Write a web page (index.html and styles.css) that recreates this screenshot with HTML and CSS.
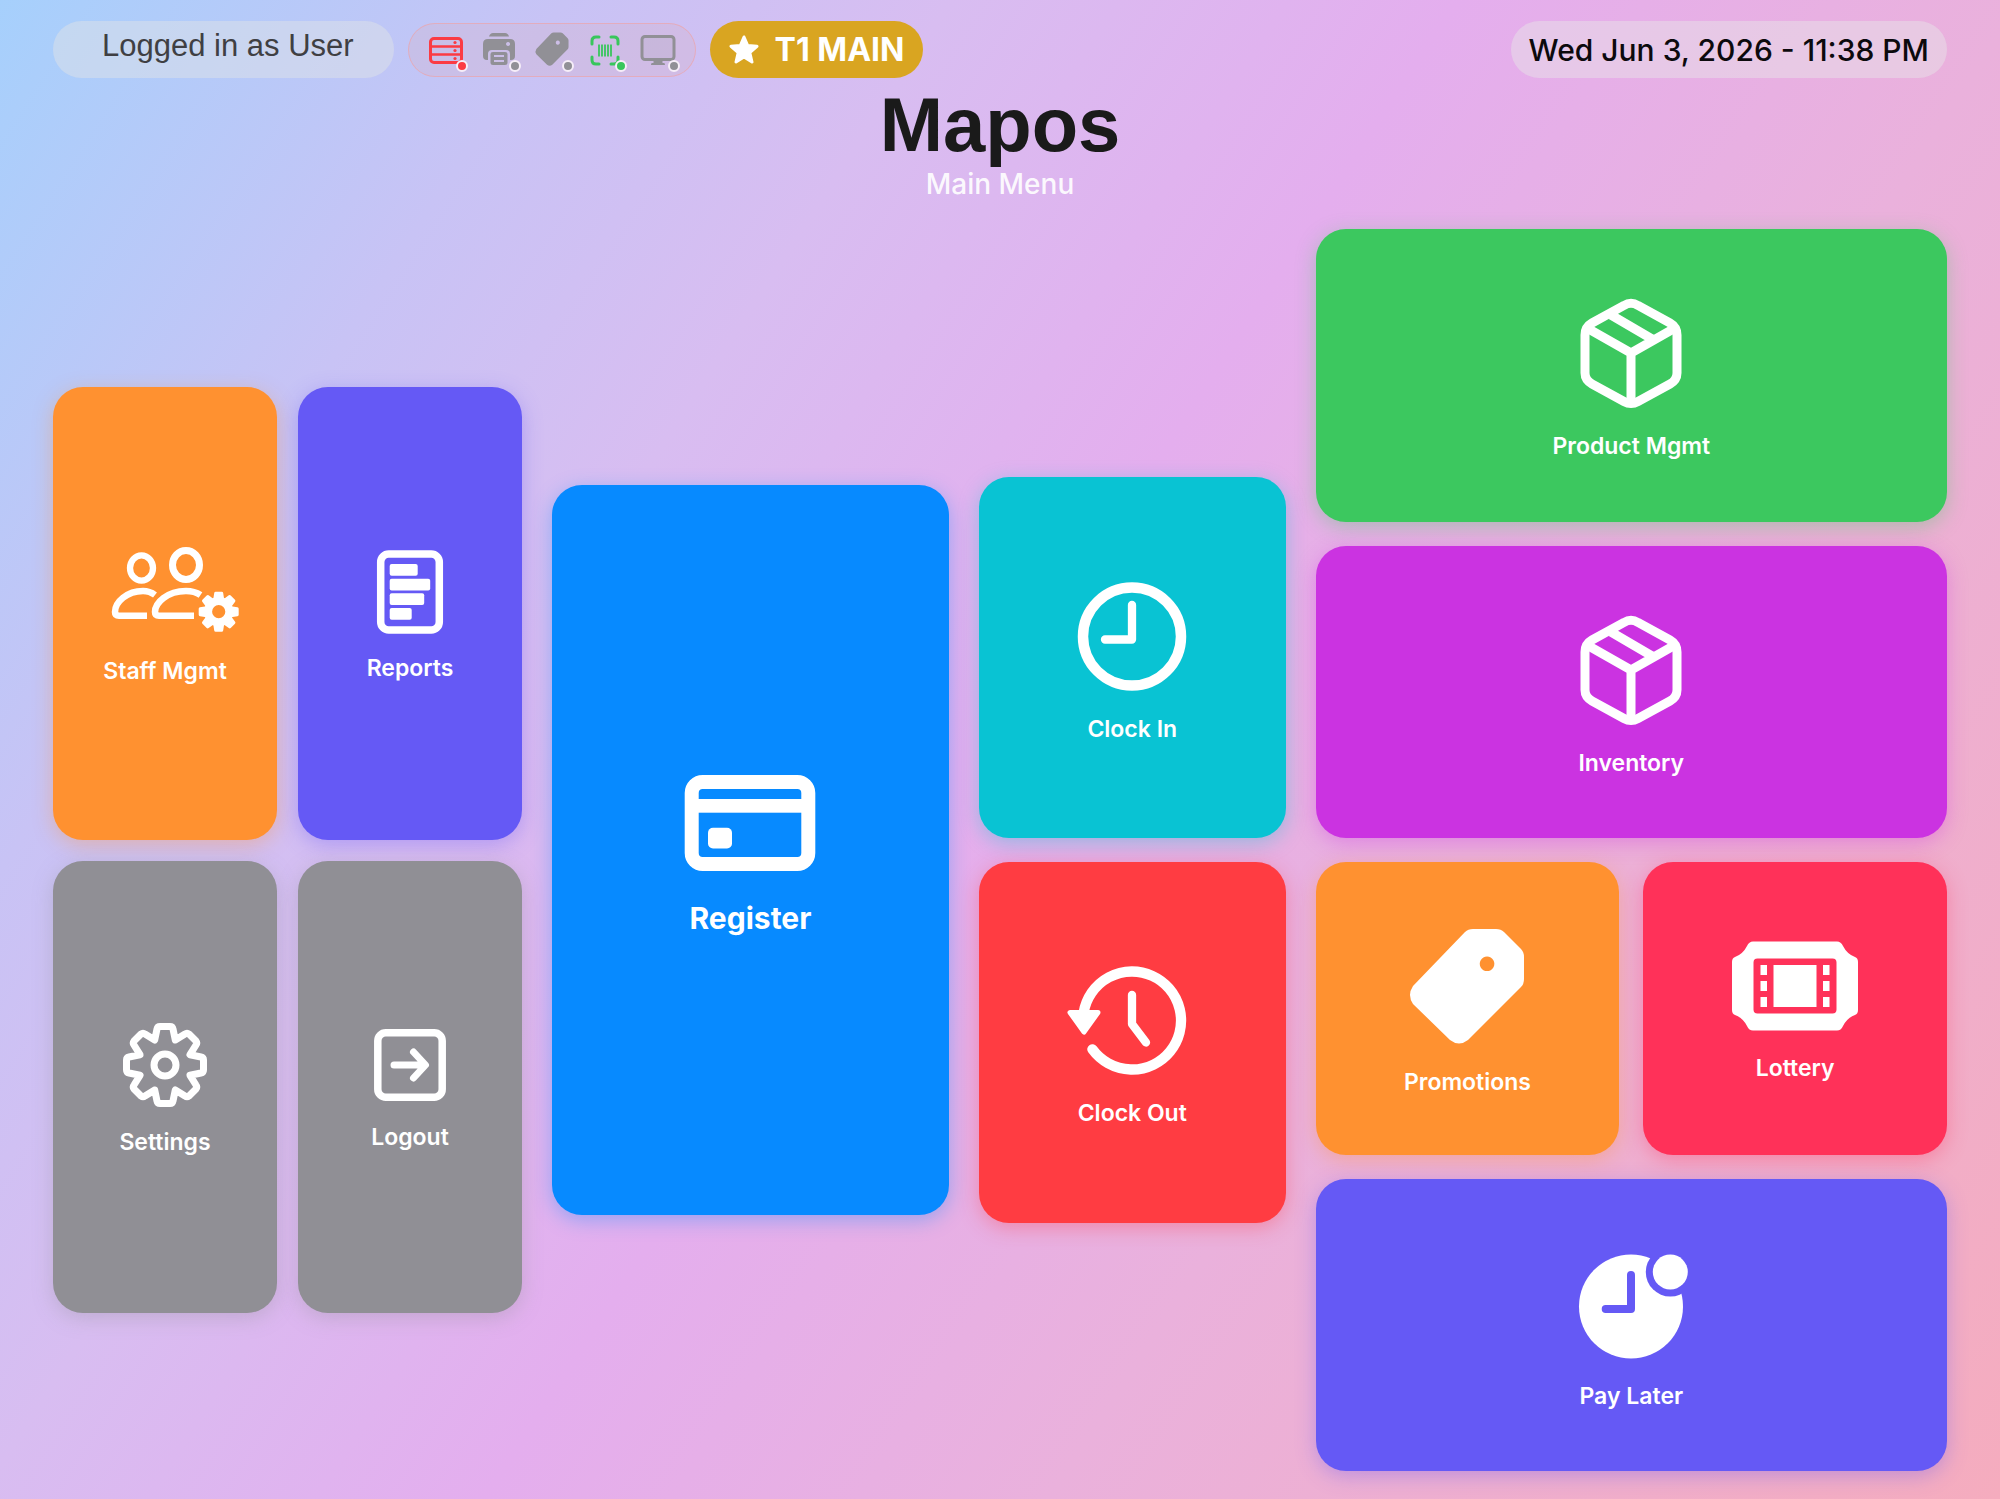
FILE: index.html
```
<!DOCTYPE html>
<html lang="en">
<head>
  <meta charset="UTF-8">
  <meta name="viewport" content="width=device-width, initial-scale=1.0">
  <title>Mapos - Main Menu</title>
  <link rel="stylesheet" href="styles.css">
</head>
<body>
  <header class="topbar">
    <div class="pill user">Logged in as User</div>

    <div class="pill devices">
      <span class="device offline">
        <svg viewBox="-18 -18 36 36" aria-label="Server">
          <rect x="-15.500" y="-11.500" width="31" height="24" rx="3.500" fill="none" stroke="currentColor" stroke-width="3"/>
          <path d="M-15-3.500H15M-15 4.500H15" stroke="currentColor" stroke-width="2.600"/>
          <circle cx="9" cy="-7.500" r="1.600"/><circle cx="9" cy=".5" r="1.600"/><circle cx="9" cy="8.500" r="1.600"/>
        </svg>
      </span>
      <span class="device">
        <svg viewBox="-18 -18 36 36" aria-label="Printer">
          <path d="M-10-13.500Q-9-17-6-17H6Q9-17 10-13.500Z"/>
          <path fill-rule="evenodd" d="M-11-11H11Q16-11 16-6V6Q16 10 12 10H11V4Q11 0 7 0H-7Q-11 0-11 4V10H-12Q-16 10-16 6V-6Q-16-11-11-11ZM9-8a2 2 0 1 0 .1 0Z"/>
          <path fill-rule="evenodd" d="M-6 2H6Q8.500 2 8.500 4V13Q8.500 15 6 15H-6Q-8.500 15-8.500 13V4Q-8.500 2-6 2ZM-5 5V7H5V5ZM-5 10V12H5V10Z"/>
        </svg>
      </span>
      <span class="device">
        <svg viewBox="-18 -18 36 36" aria-label="Label printer">
          <path transform="translate(0 -1) scale(.29)" fill-rule="evenodd" d="M6-57H29Q34-57 37-54L54-37Q57-34 57-29V-7Q57-2 54 1L1 54Q-8 61-17 54L-54 18Q-60 9-54 0L-2-54Q1-57 6-57ZM20-29a7 7 0 1 0 .1 0Z"/>
        </svg>
      </span>
      <span class="device online">
        <svg viewBox="-18 -18 36 36" aria-label="Scanner">
          <path d="M-13-6V-9Q-13-13-9-13H-6M6-13H9Q13-13 13-9V-6M13 7V10Q13 14 9 14H6M-6 14H-9Q-13 14-13 10V7" fill="none" stroke="currentColor" stroke-width="3" stroke-linecap="round"/>
          <path d="M-6-5.500V6.500M-3-5.500V6.500M0-5.500V6.500M3-5.500V6.500M6-5.500V6.500" stroke="currentColor" stroke-width="1.800"/>
        </svg>
      </span>
      <span class="device">
        <svg viewBox="-18 -18 36 36" aria-label="Customer display">
          <rect x="-16" y="-13.500" width="32" height="23" rx="3" fill="currentColor" fill-opacity=".12" stroke="currentColor" stroke-width="3"/>
          <path d="M-4.500 10H4.500V13H6Q7 13 7 15H-7Q-7 13-6 13H-4.500Z"/>
        </svg>
      </span>
    </div>

    <div class="pill terminal">
      <svg viewBox="-15 -15 30 30" aria-hidden="true">
        <path d="M0-13L3.700-4.500 13-3.700 5.800 2.500 8 12 0 7 -8 12 -5.800 2.500 -13-3.700 -3.700-4.500Z" stroke="currentColor" stroke-width="3" stroke-linejoin="round"/>
      </svg>
      T1 MAIN
    </div>

    <time class="pill clock" datetime="2026-06-03T23:38">Wed Jun 3, 2026 - 11:38 PM</time>
  </header>

  <div class="title">
    <h1>Mapos</h1>
    <p>Main Menu</p>
  </div>

  <main class="menu">
    <div class="group admin">
      <button type="button" class="tile orange">
        <svg width="150" height="100" viewBox="-75 -50 150 100" aria-hidden="true">
          <g fill="none" stroke="currentColor">
            <ellipse cx="-23.500" cy="-23" rx="11.500" ry="12.700" stroke-width="6.300"/>
            <ellipse cx="21" cy="-26" rx="13.500" ry="14.500" stroke-width="7"/>
            <path d="M-10 4C-14 1-18 0-22 0C-38 0-50 11-50 21Q-50 24.700-46 24.700H-18" stroke-width="6.500"/>
            <path d="M35.500 4C31 1 26 0 21 0C2 0-10 12-10 21Q-10 24.700-6 24.700H29" stroke-width="6.500"/>
          </g>
          <g transform="translate(53.700 20.700)" stroke="currentColor" stroke-linejoin="round">
            <circle r="10.600" fill="none" stroke-width="8"/>
            <g stroke-width="3">
              <path id="tooth" d="M-4-12L-3-18.500H3L4-12Z"/>
              <use href="#tooth" transform="rotate(45)"/>
              <use href="#tooth" transform="rotate(90)"/>
              <use href="#tooth" transform="rotate(135)"/>
              <use href="#tooth" transform="rotate(180)"/>
              <use href="#tooth" transform="rotate(225)"/>
              <use href="#tooth" transform="rotate(270)"/>
              <use href="#tooth" transform="rotate(315)"/>
            </g>
          </g>
        </svg>
        <span>Staff Mgmt</span>
      </button>
      <button type="button" class="tile indigo">
        <svg width="94" height="94" viewBox="-47 -47 94 94" aria-hidden="true">
          <rect x="-29.300" y="-37" width="58.600" height="76" rx="8" fill="none" stroke="currentColor" stroke-width="7.500"/>
          <rect x="-20.300" y="-27" width="28" height="11.700" rx="2"/>
          <rect x="-20.300" y="-12.300" width="40.500" height="11.700" rx="2"/>
          <rect x="-20.300" y="2.300" width="34.500" height="11.700" rx="2"/>
          <rect x="-20.300" y="17" width="22" height="11.700" rx="2"/>
        </svg>
        <span>Reports</span>
      </button>
      <button type="button" class="tile gray">
        <svg width="94" height="94" viewBox="-47 -47 94 94" aria-hidden="true">
          <g fill="none" stroke="currentColor" stroke-width="7" stroke-linejoin="round">
            <path d="M-5-38.500H5Q7.500-38.500 8-36L10.300-25 20-31Q22-32.500 24-31L31-24Q32.500-22 31-20L25-10.300 36-8Q38.500-7.500 38.500-5V5Q38.500 7.500 36 8L25 10.300 31 20Q32.500 22 31 24L24 31Q22 32.500 20 31L10.300 25 8 36Q7.500 38.500 5 38.500H-5Q-7.500 38.500-8 36L-10.300 25-20 31Q-22 32.500-24 31L-31 24Q-32.500 22-31 20L-25 10.300-36 8Q-38.500 7.500-38.500 5V-5Q-38.500-7.500-36-8L-25-10.300-31-20Q-32.500-22-31-24L-24-31Q-22-32.500-20-31L-10.300-25-8-36Q-7.500-38.500-5-38.500Z"/>
            <circle r="11"/>
          </g>
        </svg>
        <span>Settings</span>
      </button>
      <button type="button" class="tile gray">
        <svg width="84" height="84" viewBox="-42 -42 84 84" aria-hidden="true">
          <g fill="none" stroke="currentColor" stroke-width="7.500" stroke-linecap="round" stroke-linejoin="round">
            <rect x="-32.200" y="-32.200" width="64.400" height="64.400" rx="8"/>
            <path d="M-16 0H15M3.500-13L15.500 0 3.500 13" stroke-width="7"/>
          </g>
        </svg>
        <span>Logout</span>
      </button>
    </div>

    <div class="group sales">
      <button type="button" class="tile blue large">
        <svg width="140" height="118" viewBox="-70 -59 140 118" aria-hidden="true">
          <rect x="-58.300" y="-41" width="116.600" height="82" rx="11" fill="none" stroke="currentColor" stroke-width="14"/>
          <rect x="-56" y="-24" width="112" height="13.700"/>
          <rect x="-42" y="4.700" width="24" height="20.700" rx="5"/>
        </svg>
        <span>Register</span>
      </button>
    </div>

    <div class="group shifts">
      <button type="button" class="tile teal">
        <svg width="126" height="126" viewBox="-63 -63 126 126" aria-hidden="true">
          <g fill="none" stroke="currentColor" stroke-linecap="round" stroke-linejoin="round">
            <circle cy=".5" r="49" stroke-width="10.500"/>
            <path d="M0-31V3.500H-27" stroke-width="8.300"/>
          </g>
        </svg>
        <span>Clock In</span>
      </button>
      <button type="button" class="tile red">
        <svg width="140" height="126" viewBox="-70 -63 140 126" aria-hidden="true">
          <g fill="none" stroke="currentColor" stroke-linecap="round" stroke-linejoin="round">
            <path d="M-39.600 29.300A49 49 0 1 0-48.300-7.500" stroke-width="10.300"/>
            <path d="M0-25V4L14 22.500" stroke-width="8.300"/>
          </g>
          <path d="M-62-7.500H-34L-48 12Z" stroke="currentColor" stroke-width="5" stroke-linejoin="round"/>
        </svg>
        <span>Clock Out</span>
      </button>
    </div>

    <div class="group stock">
      <button type="button" class="tile green wide">
        <svg width="126" height="126" viewBox="0 0 126 126" aria-hidden="true">
          <g fill="none" stroke="currentColor" stroke-width="9">
            <path d="M56 15.500Q63 11 70 15.500L102 33Q109 37 109 45V83Q109 90 102 94L70 111.500Q63 115.500 56 111.500L24 94Q17 90 17 83V45Q17 37 24 33Z"/>
            <path d="M19 38L63 63 107 38M63 63V113M43 25L84 49"/>
          </g>
        </svg>
        <span>Product Mgmt</span>
      </button>
      <button type="button" class="tile purple wide">
        <svg width="126" height="126" viewBox="0 0 126 126" aria-hidden="true">
          <g fill="none" stroke="currentColor" stroke-width="9">
            <path d="M56 15.500Q63 11 70 15.500L102 33Q109 37 109 45V83Q109 90 102 94L70 111.500Q63 115.500 56 111.500L24 94Q17 90 17 83V45Q17 37 24 33Z"/>
            <path d="M19 38L63 63 107 38M63 63V113M43 25L84 49"/>
          </g>
        </svg>
        <span>Inventory</span>
      </button>
      <button type="button" class="tile orange">
        <svg width="132" height="132" viewBox="-66 -66 132 132" aria-hidden="true">
          <path fill-rule="evenodd" d="M6-57H29Q34-57 37-54L54-37Q57-34 57-29V-7Q57-2 54 1L1 54Q-8 61-17 54L-54 18Q-60 9-54 0L-2-54Q1-57 6-57ZM20-29.500a7.300 7.300 0 1 0 .1 0Z"/>
        </svg>
        <span>Promotions</span>
      </button>
      <button type="button" class="tile pink">
        <svg width="132" height="104" viewBox="-66 -52 132 104" aria-hidden="true">
          <path fill-rule="evenodd" d="M-42-44.500H42Q46-44.500 48-40Q52-32 60-29Q63-28 63-24V24Q63 28 60 29Q52 32 48 40Q46 44.500 42 44.500H-42Q-46 44.500-48 40Q-52 32-60 29Q-63 28-63 24V-24Q-63-28-60-29Q-52-32-48-40Q-46-44.500-42-44.500ZM-37.500-27.500Q-41.500-27.500-41.500-23.500V23.500Q-41.500 27.500-37.500 27.500H37.500Q41.500 27.500 41.500 23.500V-23.500Q41.500-27.500 37.500-27.500Z"/>
          <path d="M-21.500-21H21.500V21H-21.500ZM-34.500-21H-28V-11H-34.500ZM-34.500-5H-28V5H-34.500ZM-34.500 11H-28V21H-34.500ZM28-21H34.500V-11H28ZM28-5H34.500V5H28ZM28 11H34.500V21H28Z"/>
        </svg>
        <span>Lottery</span>
      </button>
      <button type="button" class="tile indigo wide">
        <svg width="126" height="126" viewBox="-63 -63 126 126" aria-hidden="true">
          <mask id="badge-cut">
            <rect x="-63" y="-63" width="126" height="126" fill="#fff"/>
            <circle cx="39.300" cy="-31" r="24.500" fill="#000"/>
            <path d="M0-28V6H-25.300" fill="none" stroke="#000" stroke-width="8" stroke-linecap="round" stroke-linejoin="round"/>
          </mask>
          <circle cy="3.500" r="52" mask="url(#badge-cut)"/>
          <circle cx="39.300" cy="-31" r="17.500"/>
        </svg>
        <span>Pay Later</span>
      </button>
    </div>
  </main>
</body>
</html>
```
FILE: styles.css
```
* {
  box-sizing: border-box;
}
body {
  margin: 0;
  min-height: 100vh;
  padding: 21px 53px 28px;
  display: flex;
  flex-direction: column;
  font-family: Inter, "Liberation Sans", sans-serif;
  background: linear-gradient(123deg, #a6d0fc 0%, #c8c3f5 19%, #d8bdf1 32%, #e4aeee 49%, #eab1dc 68%, #f5acbe 100%);
}
h1, p {
  margin: 0;
}

/* top bar */
.topbar {
  display: flex;
  align-items: center;
  gap: 14px;
}
.pill {
  height: 57px;
  display: flex;
  align-items: center;
  border-radius: 29px;
  white-space: nowrap;
}
.user {
  padding: 0 40px 8px 49px;
  font-family: "Liberation Sans", Arial, sans-serif;
  font-size: 31px;
  color: #3f3f43;
  background: rgba(222, 226, 232, 0.5);
}
.devices {
  height: 54px;
  padding: 0 19px;
  gap: 17px;
  border: 1px solid rgba(240, 160, 160, 0.6);
  background: rgba(215, 180, 200, 0.3);
}
.device {
  position: relative;
  width: 36px;
  height: 36px;
  color: #919096;
}
.device svg {
  display: block;
  fill: currentColor;
}
.device::after {
  content: "";
  position: absolute;
  right: -4px;
  bottom: -4px;
  width: 8px;
  height: 8px;
  border: 2px solid #f6eef8;
  border-radius: 50%;
  background: currentColor;
}
.offline {
  color: #fb3b43;
}
.online {
  color: #38c65c;
}
.terminal {
  padding: 0 19px;
  gap: 16px;
  font-size: 32px;
  font-weight: 700;
  color: #fff;
  background: #d9a521;
}
.terminal svg {
  width: 30px;
  height: 30px;
  fill: currentColor;
}
.clock {
  margin-left: auto;
  padding: 0 18px;
  font-size: 30px;
  font-weight: 500;
  color: #0c0a0d;
  background: rgba(232, 226, 232, 0.5);
}

/* title */
.title {
  margin: 4px 0 28px;
  text-align: center;
}
h1 {
  font-family: "Liberation Sans", Arial, sans-serif;
  font-size: 76px;
  line-height: 85px;
  color: #1a1a1a;
}
.title p {
  font-size: 28px;
  font-weight: 500;
  line-height: 34px;
  color: rgba(255, 255, 255, 0.92);
}

/* menu tiles */
.menu {
  flex: 1;
  display: grid;
  grid-template-columns: 26fr 22fr 17fr 35fr;
  align-items: center;
  gap: 30px;
}
.group {
  display: grid;
  grid-auto-rows: 1fr;
  gap: 24px;
}
.admin {
  grid-template-columns: 1fr 1fr;
  gap: 21px;
  height: 74.5%;
}
.sales {
  height: 58.7%;
}
.shifts {
  height: 60%;
}
.stock {
  grid-template-columns: 1fr 1fr;
  height: 100%;
}
.wide {
  grid-column: span 2;
}
.tile {
  --tile: #8e8e93;
  display: flex;
  flex-direction: column;
  align-items: center;
  justify-content: center;
  gap: 16px;
  padding: 0;
  border: none;
  border-radius: 30px;
  font-family: inherit;
  font-size: 23px;
  font-weight: 600;
  line-height: 28px;
  color: #fff;
  background: var(--tile);
  box-shadow: 0 5px 20px color-mix(in srgb, var(--tile) 35%, transparent);
  cursor: pointer;
}
.tile svg {
  fill: currentColor;
}
.large {
  gap: 18px;
  font-size: 30px;
  font-weight: 700;
  line-height: 36px;
}
.orange {
  --tile: #ff9130;
}
.indigo {
  --tile: #6559f5;
}
.gray {
  --tile: #908f95;
}
.blue {
  --tile: #078aff;
}
.teal {
  --tile: #09c3d3;
}
.red {
  --tile: #ff3c42;
}
.green {
  --tile: #3cc85f;
}
.purple {
  --tile: #cb33e1;
}
.pink {
  --tile: #ff3159;
}
```
